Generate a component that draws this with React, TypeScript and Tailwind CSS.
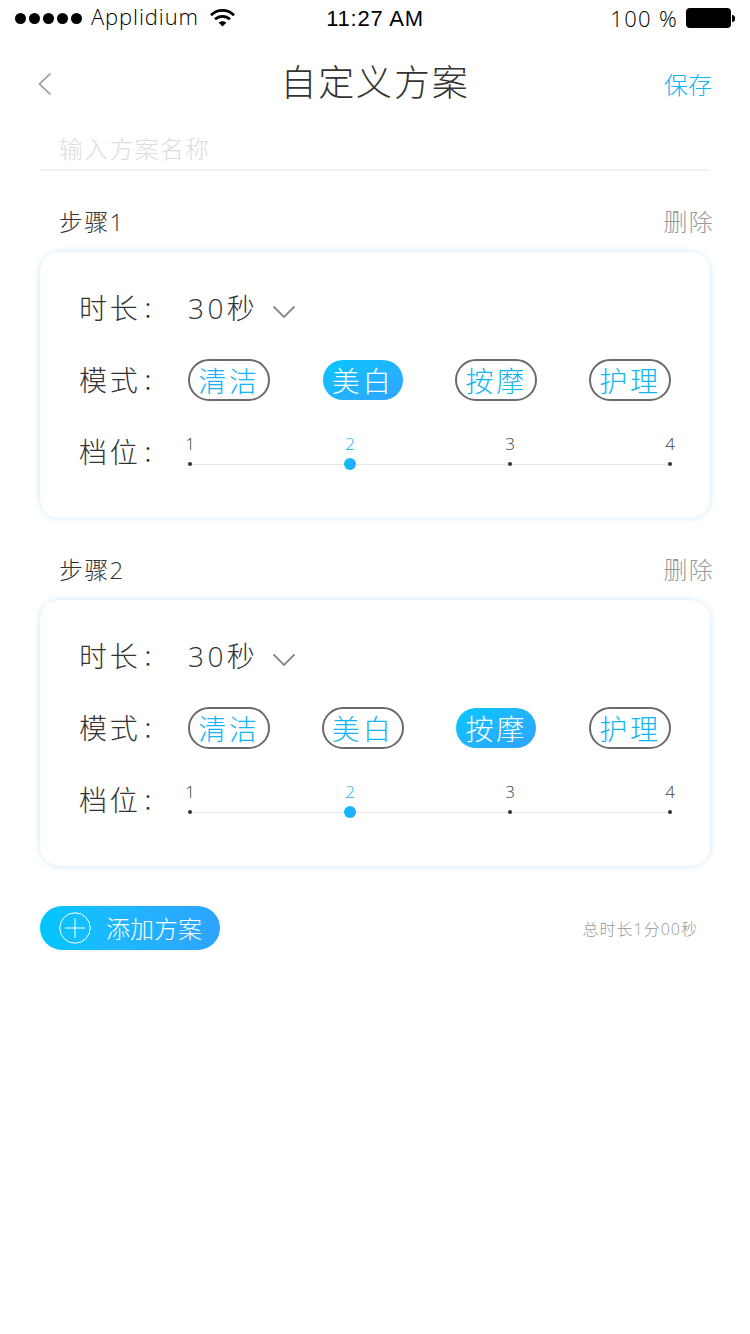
import { useState } from 'react';
import clsx from 'clsx';

interface Step {
  duration: number;
  mode: string;
  level: number;
}

const MODES = ['清洁', '美白', '按摩', '护理'];
const LEVELS = [1, 2, 3, 4];

const INITIAL_STEPS: Step[] = [
  { duration: 30, mode: '美白', level: 2 },
  { duration: 30, mode: '按摩', level: 2 },
];

function StatusBar() {
  return (
    <div className="grid h-9 grid-cols-3 items-center pl-[15px] pr-[15px] text-black">
      <div className="flex items-center">
        <div className="flex gap-[3px]">
          {[0, 1, 2, 3, 4].map((i) => (
            <span key={i} className="h-[11px] w-[11px] rounded-full bg-black" />
          ))}
        </div>
        <span className="-mt-1 ml-[9px] font-['Open_Sans','Noto_Sans',sans-serif] text-[22px] font-light leading-8 tracking-[0.9px]">
          Applidium
        </span>
        <svg className="-mt-px ml-[11px] shrink-0" width="25" height="18" viewBox="0 0 25 18" fill="none">
          <path d="M1 6.2C7.5-.2 17.5-.2 24 6.2" stroke="black" strokeWidth="2.8" />
          <path d="M5 10.3c4.3-4 10.7-4 15 0" stroke="black" strokeWidth="2.7" />
          <path d="M8.7 13.8c2.2-2 5.4-2 7.6 0L12.5 17.6z" fill="black" />
        </svg>
      </div>
      <span className="mt-0.5 text-center font-['Liberation_Sans',Arial,sans-serif] text-[22px] leading-8 tracking-[0.8px]">
        11:27 AM
      </span>
      <div className="flex items-center justify-end">
        <span className="-mt-px mr-2 font-['Open_Sans','Noto_Sans',sans-serif] text-[22px] font-light leading-8 tracking-[1.3px]">
          100 %
        </span>
        <span className="h-5 w-[45px] rounded-[4px] bg-black" />
        <span className="ml-px h-[7px] w-[3px] rounded-r-full bg-black" />
      </div>
    </div>
  );
}

function RowLabel({ children }: { children: string }) {
  return (
    <span className="flex w-[109px] shrink-0 items-center text-[28px] tracking-[2.8px]">
      {children}
      <span className="ml-0.5 text-[22px] leading-none">：</span>
    </span>
  );
}

function LevelSlider({ value, onChange }: { value: number; onChange: (level: number) => void }) {
  return (
    <div className="relative -ml-2 flex w-[500px] shrink-0 justify-between">
      <div className="absolute left-[10px] right-[10px] top-[30px] h-px bg-[#e6e6e6]" />
      {LEVELS.map((level) => {
        const active = level === value;
        return (
          <button
            key={level}
            onClick={() => onChange(level)}
            className="relative flex w-5 flex-col items-center"
          >
            <span className={clsx('text-[17px] leading-5', active ? 'text-[#12b5f2]' : 'text-[#444]')}>
              {level}
            </span>
            <span className="flex h-5 items-center">
              <span
                className={clsx(
                  'rounded-full',
                  active ? 'h-3 w-3 bg-linear-to-r from-[#0cbcff] to-[#22acff]' : 'h-1 w-1 bg-[#333]'
                )}
              />
            </span>
          </button>
        );
      })}
    </div>
  );
}

interface StepCardProps {
  index: number;
  step: Step;
  onChange: (step: Step) => void;
  onDelete: () => void;
}

function StepCard({ index, step, onChange, onDelete }: StepCardProps) {
  return (
    <section className="mb-5">
      <div className="flex h-[60px] items-center justify-between pl-[19px] pt-0.5 text-2xl font-light tracking-[1.2px]">
        <h2 className="font-light text-[#333]">步骤{index + 1}</h2>
        <button onClick={onDelete} className="-mr-1 text-[#999]">
          删除
        </button>
      </div>

      <div className="-ml-px h-[268px] w-[672px] rounded-[20px] border border-[#e2f3ff] pl-[39px] pt-7 shadow-[0_0_6px_#dbf0ff]">
        <div className="flex h-14 items-center">
          <RowLabel>时长</RowLabel>
          <button className="flex items-center text-[28px] tracking-[3.4px]">
            30秒
            <svg className="ml-[14px] mt-2" width="24" height="14" viewBox="0 0 24 14" fill="none">
              <path d="M1.5 1.5 12 12 22.5 1.5" stroke="#888" strokeWidth="1.8" />
            </svg>
          </button>
        </div>

        <div className="mt-4 flex h-14 items-center">
          <RowLabel>模式</RowLabel>
          <div className="flex w-[483px] justify-between">
            {MODES.map((mode) => (
              <button
                key={mode}
                onClick={() => onChange({ ...step, mode })}
                className={clsx(
                  'flex items-center justify-center whitespace-nowrap rounded-full pt-px text-[28px] leading-none tracking-[2.8px]',
                  mode === step.mode
                    ? 'm-px h-10 w-20 bg-linear-to-br from-[#00c6ff] to-[#2ea3ff] text-white'
                    : 'h-[42px] w-[82px] border-2 border-[#6b6b6b] text-[#12b5f2]'
                )}
              >
                {mode}
              </button>
            ))}
          </div>
        </div>

        <div className="mt-4 flex h-14 items-center">
          <RowLabel>档位</RowLabel>
          <div className="pt-1">
            <LevelSlider value={step.level} onChange={(level) => onChange({ ...step, level })} />
          </div>
        </div>
      </div>
    </section>
  );
}

export default function App() {
  const [name, setName] = useState('');
  const [steps, setSteps] = useState(INITIAL_STEPS);

  const total = steps.reduce((sum, step) => sum + step.duration, 0);

  const updateStep = (index: number, next: Step) => {
    setSteps(steps.map((step, i) => (i === index ? next : step)));
  };

  return (
    <div className="min-h-[1334px] w-[750px] overflow-hidden bg-white font-['Open_Sans','Noto_Sans_CJK_SC',sans-serif] font-light text-[#333]">
      <StatusBar />

      {/* Header */}
      <header className="grid h-[94px] grid-cols-3 items-center pl-[38px] pr-[38px]">
        <button>
          <svg width="14" height="24" viewBox="0 0 14 24" fill="none" className="mt-0.5">
            <path d="M12.5 1.5 1.5 12 12.5 22.5" stroke="#999" strokeWidth="1.7" />
          </svg>
        </button>
        <h1 className="whitespace-nowrap text-center text-4xl font-light tracking-[1.8px]">自定义方案</h1>
        <button className="justify-self-end pt-1 text-2xl text-[#12b5f2]">保存</button>
      </header>

      <main className="px-10">
        <input
          value={name}
          onChange={(e) => setName(e.target.value)}
          placeholder="输入方案名称"
          className="mb-5 block h-[41px] w-full border-b-2 border-[#f2f2f2] pb-0.5 pl-[19px] text-2xl font-light tracking-[1.2px] outline-none placeholder:text-[#ddd]"
        />

        {steps.map((step, i) => (
          <StepCard
            key={i}
            index={i}
            step={step}
            onChange={(next) => updateStep(i, next)}
            onDelete={() => setSteps(steps.filter((_, j) => j !== i))}
          />
        ))}

        {/* Add button + total */}
        <div className="mt-[39px] flex items-center justify-between">
          <button
            onClick={() => setSteps([...steps, { duration: 30, mode: '清洁', level: 1 }])}
            className="flex h-11 w-[180px] items-center rounded-full bg-linear-to-r from-[#00c6ff] to-[#2ea3ff] pl-[19px] text-2xl text-white"
          >
            <svg className="mr-[15px]" width="32" height="32" viewBox="0 0 32 32" fill="none" stroke="white">
              <circle cx="16" cy="16" r="15.2" />
              <path d="M16 6v20M6 16h20" />
            </svg>
            <span className="pt-0.5">添加方案</span>
          </button>
          <span className="mr-3 pt-px text-base tracking-[1px] text-[#999]">
            总时长{Math.floor(total / 60)}分{String(total % 60).padStart(2, '0')}秒
          </span>
        </div>
      </main>
    </div>
  );
}
